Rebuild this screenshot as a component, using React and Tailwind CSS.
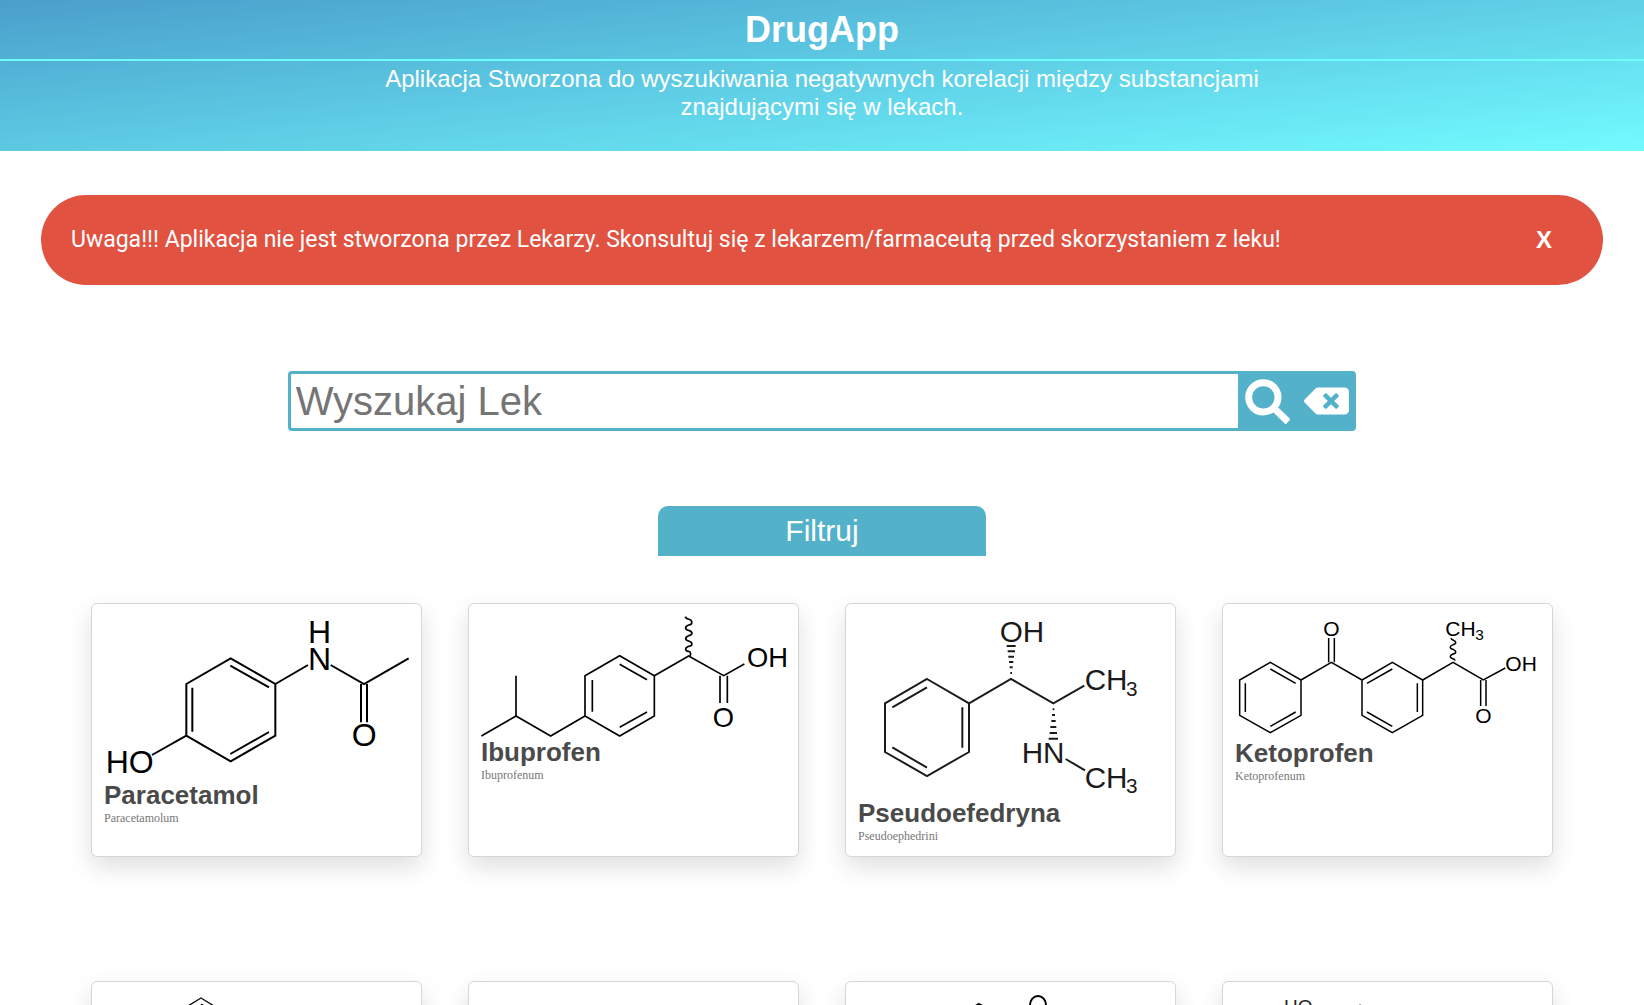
import { FaBackspace } from "react-icons/fa";

function Paracetamol() {
  return (
    <svg viewBox="72 78 915 492" className="block w-full overflow-visible" role="img" aria-label="Paracetamol">
      <g fill="none" stroke="#000" strokeWidth="6">
        <path d="M452 205L586 282V437L452 514L319 437V282Z" />
        <path d="M451 227L567 292M567 426L451 492M337 293V425" />
        <path d="M586 282L684 225M752 225L852 282L986 205M843 282V397M861 282V397M319 437L216 495" />
      </g>
      <g fontFamily="Liberation Sans, Arial, sans-serif" fontSize="96" fill="#000">
        <text x="684" y="158">H</text>
        <text x="684" y="240">N</text>
        <text x="815" y="469">O</text>
        <text x="77" y="548">HO</text>
      </g>
    </svg>
  );
}

function Ibuprofen() {
  return (
    <svg viewBox="63 78 915 363" className="block w-full overflow-visible" role="img" aria-label="Ibuprofen">
      <g fill="none" stroke="#000" strokeWidth="5">
        <path d="M479 197L583 257V378L479 438L375 378V257Z" />
        <path d="M479 223L561 269M561 366L479 412M397 270V365" />
        <path d="M583 257L686 198L791 257L853 222M780 257V339M802 257V339" />
        <path d="M375 378L272 438L168 378L64 438M168 378V257" />
        <path d="M676 80Q677 86 685 87C699 91 699 103 686 105C674 109 674 119 686 121C699 125 699 135 686 137C674 141 674 151 686 153C699 157 699 167 686 169C674 173 674 183 686 184Q696 188 689 200" />
      </g>
      <g fontFamily="Liberation Sans, Arial, sans-serif" fontSize="82" fill="#000">
        <text x="861" y="231">OH</text>
        <text x="758" y="410">O</text>
      </g>
    </svg>
  );
}

function Pseudoephedrine() {
  return (
    <svg viewBox="84 78 915 546" className="block w-full overflow-visible" role="img" aria-label="Pseudoefedryna">
      <g fill="none" stroke="#1c1a1b" strokeWidth="6">
        <path d="M291 267L417 340V486L291 558L165 486V340Z" />
        <path d="M291 292L187 352M187 472L291 533M397 352V473" />
        <path d="M417 340L543 267L670 340L763 287M707 507L765 541" />
        <path d="M530 168H557M533 184H555M535 200H552M537 216H550M539 232H548M541 249H546" />
        <path d="M668 358H673M666 375H675M664 393H677M661 411H679M659 429H681M656 446H684" />
      </g>
      <g fontFamily="Liberation Sans, Arial, sans-serif" fontSize="89" fill="#1c1a1b">
        <text x="509" y="155">OH</text>
        <text x="764" y="301">CH</text>
        <text x="575" y="519">HN</text>
        <text x="764" y="593">CH</text>
        <g fontSize="62">
          <text x="888" y="318">3</text>
          <text x="888" y="609">3</text>
        </g>
      </g>
    </svg>
  );
}

function Ketoprofen() {
  return (
    <svg viewBox="75 78 915 366" className="block w-full overflow-visible" role="img" aria-label="Ketoprofen">
      <g fill="none" stroke="#000" strokeWidth="4.5">
        <path d="M181 217L273 270V376L181 428L89 376V270Z" />
        <path d="M181 237L257 280M257 366L181 409M106 280V366" />
        <path d="M547 217L638 270V376L547 428L456 376V270Z" />
        <path d="M547 237L471 280M471 366L547 409M622 280V366" />
        <path d="M273 270L364 217L456 270M356 217V144M373 217V144" />
        <path d="M638 270L729 217L820 270L886 234M812 270V348M828 270V348" />
        <path d="M724 144Q723 149 729 150C740 154 740 162 729 164C718 168 718 176 729 178C740 182 740 190 729 192C718 196 718 204 729 206Q734 207 735 212" />
      </g>
      <g fontFamily="Liberation Sans, Arial, sans-serif" fontSize="63" fill="#000">
        <text x="340" y="137">O</text>
        <text x="706" y="137">CH</text>
        <text x="796" y="149" fontSize="46">3</text>
        <text x="886" y="243">OH</text>
        <text x="796" y="400">O</text>
      </g>
    </svg>
  );
}

function RingTop() {
  return (
    <svg viewBox="0 0 305 180" className="block w-full" fill="none" stroke="#111" strokeWidth="1.4" aria-hidden="true">
      <path d="M97 4L123 20V50L97 66L71 50V20Z" />
      <path d="M97 10L118 23M76 23V47M97 60L118 47" />
    </svg>
  );
}

function KetoneTop() {
  return (
    <svg viewBox="0 0 305 180" className="block w-full" aria-hidden="true">
      <g fill="none" stroke="#000" strokeWidth="2">
        <path d="M121 10L151 27V61L121 78L91 61V27Z" />
        <path d="M151 27L180 42M177 42V24M183 42V24" />
      </g>
      <ellipse cx="180" cy="11" rx="8" ry="9" fill="none" stroke="#000" strokeWidth="2" />
    </svg>
  );
}

function HydroxyTop() {
  return (
    <svg viewBox="0 0 305 180" className="block w-full" aria-hidden="true">
      <path d="M76 20L100 34L125 11L150 26V56L125 70L100 56V34" fill="none" stroke="#222" strokeWidth="1.2" />
      <text x="49" y="19" fontFamily="Liberation Sans, Arial, sans-serif" fontSize="19" fill="#222">HO</text>
    </svg>
  );
}

const drugs = [
  { name: "Paracetamol", latin: "Paracetamolum", Drawing: Paracetamol },
  { name: "Ibuprofen", latin: "Ibuprofenum", Drawing: Ibuprofen },
  { name: "Pseudoefedryna", latin: "Pseudoephedrini", Drawing: Pseudoephedrine },
  { name: "Ketoprofen", latin: "Ketoprofenum", Drawing: Ketoprofen },
  { Drawing: RingTop },
  {},
  { Drawing: KetoneTop },
  { Drawing: HydroxyTop },
];

function DrugCard({ name, latin, Drawing }) {
  return (
    <article className="min-h-[254px] rounded-md border border-[#d6d6d6] bg-white p-3 shadow-[0_10px_24px_rgba(0,0,0,0.13)]">
      {Drawing && <Drawing />}
      {name && <h2 className="text-[26px] leading-[30px] font-bold text-[#4a4a4a]">{name}</h2>}
      {latin && (
        <p className="font-['Liberation_Serif','Times_New_Roman',serif] text-xs text-[#777]">{latin}</p>
      )}
    </article>
  );
}

export default function App() {
  return (
    <div className="h-screen overflow-hidden bg-white font-['Liberation_Sans',Arial,sans-serif]">
      <header className="h-[151px] bg-[linear-gradient(174deg,#4a9fcb,#72fbff)] text-center text-white">
        <h1 className="border-b-2 border-[#6ffcff] pt-2 pb-2 text-4xl leading-[43px] font-bold">DrugApp</h1>
        <p className="mx-auto max-w-[987px] pt-1 text-2xl leading-7">
          Aplikacja Stworzona do wyszukiwania negatywnych korelacji między substancjami znajdującymi się w lekach.
        </p>
      </header>

      <main>
        <div
          role="alert"
          className="mx-[41px] mt-11 flex h-[90px] items-center justify-between rounded-full bg-[#e15241] pr-[51px] pl-[30px] text-white"
        >
          <p className="font-[Roboto,sans-serif] text-[23px]">
            Uwaga!!! Aplikacja nie jest stworzona przez Lekarzy. Skonsultuj się z lekarzem/farmaceutą przed skorzystaniem z leku!
          </p>
          <button type="button" aria-label="Zamknij" className="text-2xl font-bold">X</button>
        </div>

        <form
          className="mx-auto mt-[86px] flex h-[60px] w-[65%] overflow-hidden rounded border-[3px] border-[#53b1c9] bg-[#53b1c9]"
          onSubmit={(e) => e.preventDefault()}
        >
          <input
            type="text"
            aria-label="Wyszukaj Lek"
            placeholder="Wyszukaj Lek"
            className="min-w-0 flex-1 bg-white px-[5px] text-[40px] outline-none placeholder:text-[#757575]"
          />
          <button type="submit" aria-label="Szukaj" className="flex w-[59px] items-center justify-center">
            <svg viewBox="135 594 135 135" className="size-[45px]" fill="none" stroke="#fff" aria-hidden="true">
              <circle cx="190" cy="649" r="44" strokeWidth="21" />
              <path d="M235 684L267 715L257 726L224 694Z" fill="#fff" strokeWidth="6" strokeLinejoin="round" />
            </svg>
          </button>
          <button type="button" aria-label="Wyczyść" className="flex w-14 items-center justify-end pr-1">
            <FaBackspace className="h-9 w-[45px] text-white" />
          </button>
        </form>

        <button
          type="button"
          className="mx-auto mt-[75px] block h-[50px] w-1/5 rounded-t-[10px] bg-[#53b1c9] text-3xl text-white"
        >
          Filtruj
        </button>

        <section className="mt-[47px] grid grid-cols-4 gap-x-[46px] gap-y-[124px] px-[91px]">
          {drugs.map((drug, i) => (
            <DrugCard key={i} {...drug} />
          ))}
        </section>
      </main>
    </div>
  );
}
